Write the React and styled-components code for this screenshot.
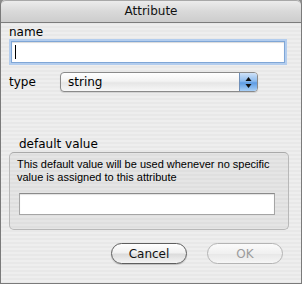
import styled, { createGlobalStyle } from "styled-components";

const GlobalStyle = createGlobalStyle`
  html, body {
    margin: 0;
    padding: 0;
    background: #8c8c8c;
  }
  * {
    box-sizing: border-box;
  }
`;

export default function App() {
  return (
    <>
      <GlobalStyle />
      <Window>
        <TitleBar>Attribute</TitleBar>
        <Content>
          <Label>name</Label>
          <NameInput />
          <TypeRow>
            <RowLabel>type</RowLabel>
            <Select>
              <SelectText>string</SelectText>
              <SelectArrows>
                <svg width="7" height="13" viewBox="0 0 7 13">
                  <polygon points="3.5,1 6.5,5 0.5,5" fill="#111" />
                  <polygon points="0.5,8 6.5,8 3.5,12" fill="#111" />
                </svg>
              </SelectArrows>
            </Select>
          </TypeRow>
          <GroupLegend>default value</GroupLegend>
          <GroupBox>
            <Description>
              This default value will be used whenever no specific value is
              assigned to this attribute
            </Description>
            <ValueInput />
          </GroupBox>
          <ButtonRow>
            <PillButton>Cancel</PillButton>
            <PillButton disabled>OK</PillButton>
          </ButtonRow>
        </Content>
      </Window>
    </>
  );
}

const Window = styled.div`
  width: 302px;
  height: 284px;
  display: flex;
  flex-direction: column;
  border-radius: 5px 5px 0 0;
  border-left: 1px solid #7a7a7a;
  border-right: 1px solid #7a7a7a;
  border-bottom: 1px solid #7a7a7a;
  overflow: hidden;
  background: repeating-linear-gradient(
    to bottom,
    #eeeeee 0px,
    #eeeeee 2px,
    #e8e8e8 2px,
    #e8e8e8 4px
  );
  font-family: "DejaVu Sans", sans-serif;
  font-size: 12px;
  color: #000;
`;

const TitleBar = styled.div`
  height: 23px;
  line-height: 21px;
  text-align: center;
  border-top: 1px solid #a8a8a8;
  border-bottom: 1px solid #7c7c7c;
  border-radius: 5px 5px 0 0;
  background: linear-gradient(to bottom, #ececec, #d9d9d9 50%, #cdcdcd);
  font-size: 12px;
  color: #111;
`;

const Content = styled.div`
  flex: 1;
  display: flex;
  flex-direction: column;
  padding: 2px 18px 0 8px;
`;

const Label = styled.div`
  line-height: 14px;
  height: 14px;
`;

const NameInput = styled.div`
  margin: 2px 0 0 2px;
  width: 274px;
  height: 22px;
  background: #fff;
  border: 1px solid #7fa6d6;
  box-shadow: 0 0 0 2px #b3cdee, inset 0 1px 1px rgba(0, 0, 0, 0.15);
  position: relative;

  &::after {
    content: "";
    position: absolute;
    left: 3px;
    top: 3px;
    width: 1px;
    height: 14px;
    background: #000;
  }
`;

const TypeRow = styled.div`
  display: flex;
  align-items: center;
  margin-top: 9px;
  height: 20px;
`;

const RowLabel = styled.div`
  width: 51px;
  padding-left: 0;
  line-height: 14px;
`;

const Select = styled.div`
  width: 198px;
  height: 20px;
  display: flex;
  border: 1px solid #8a8a8a;
  border-radius: 4px;
  background: linear-gradient(to bottom, #ffffff, #f3f3f3 45%, #e6e6e6 55%, #f7f7f7);
  box-shadow: 0 1px 1px rgba(0, 0, 0, 0.12);
  overflow: hidden;
`;

const SelectText = styled.div`
  flex: 1;
  padding-left: 7px;
  line-height: 18px;
`;

const SelectArrows = styled.div`
  width: 18px;
  display: flex;
  align-items: center;
  justify-content: center;
  border-left: 1px solid #6f8fb8;
  background: linear-gradient(to bottom, #cfe2f8, #8dbbee 45%, #5d9be3 55%, #a9d0f7);
`;

const GroupLegend = styled.div`
  margin: 45px 0 0 10px;
  line-height: 14px;
  height: 15px;
`;

const GroupBox = styled.div`
  width: 280px;
  height: 78px;
  padding: 5px 7px 0;
  border: 1px solid #b8b8b8;
  border-top-color: #a9a9a9;
  border-radius: 5px;
  background: rgba(0, 0, 0, 0.035);
  display: flex;
  flex-direction: column;
`;

const Description = styled.div`
  font-family: "Liberation Sans", sans-serif;
  font-size: 11px;
  line-height: 13px;
  height: 26px;
`;

const ValueInput = styled.div`
  margin: 9px 0 0 2px;
  width: 256px;
  height: 22px;
  background: #fff;
  border: 1px solid #a5a5a5;
  border-top-color: #8a8a8a;
  box-shadow: inset 0 1px 1px rgba(0, 0, 0, 0.12);
`;

const ButtonRow = styled.div`
  display: flex;
  justify-content: flex-end;
  gap: 20px;
  margin-top: 13px;
`;

const PillButton = styled.div`
  width: 76px;
  height: 21px;
  display: flex;
  align-items: center;
  justify-content: center;
  border-radius: 11px;
  border: 1px solid ${(p) => (p.disabled ? "#b4b4b4" : "#5e5e5e")};
  background: ${(p) =>
    p.disabled
      ? "linear-gradient(to bottom, #fbfbfb, #f0f0f0 50%, #e8e8e8 55%, #f6f6f6)"
      : "linear-gradient(to bottom, #ffffff, #f1f1f1 45%, #dcdcdc 55%, #f4f4f4)"};
  box-shadow: ${(p) => (p.disabled ? "none" : "0 1px 1px rgba(0, 0, 0, 0.2)")};
  color: ${(p) => (p.disabled ? "#9c9c9c" : "#111")};
  font-size: 12px;
`;
